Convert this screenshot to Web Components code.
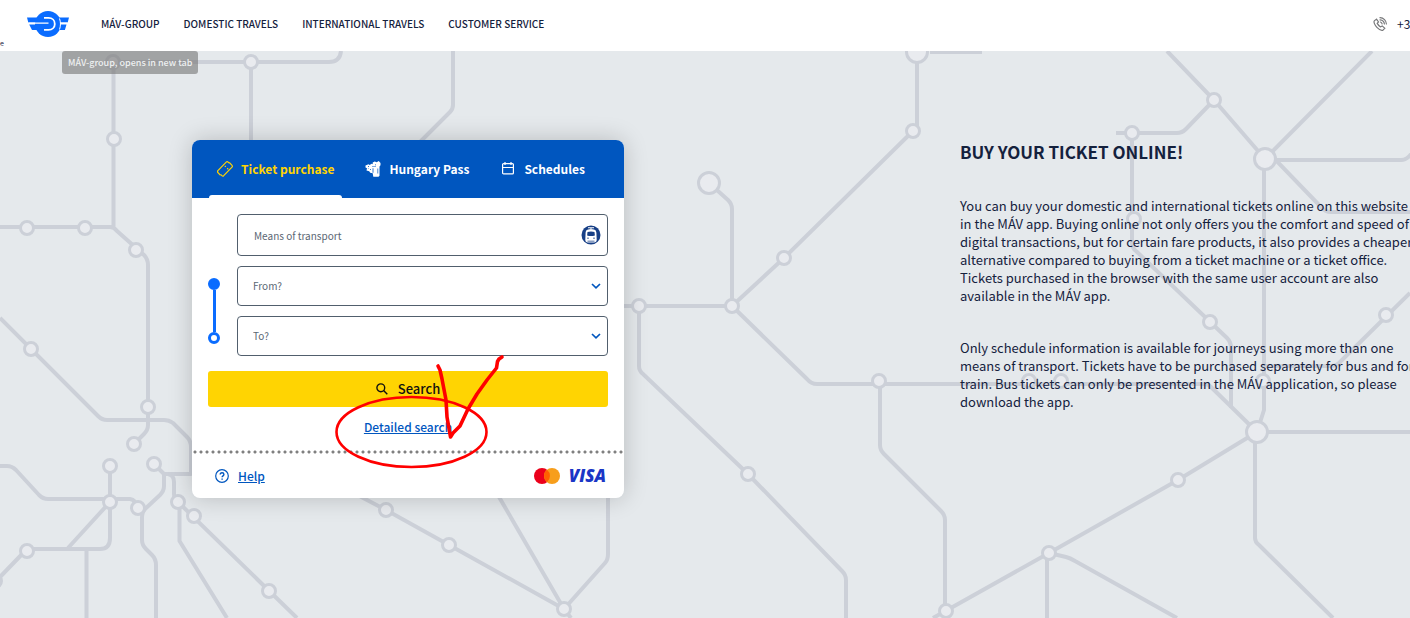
<!DOCTYPE html>
<html lang="en">
<head>
<meta charset="utf-8">
<title>MÁV-group</title>
<style>
  body {
    margin: 0;
    min-height: 100vh;
    display: flex;
    flex-direction: column;
    overflow: hidden;
    color: #14213d;
    background: #e5e9ec;
    font-family: "Noto Sans CJK SC", "Noto Sans", sans-serif;
  }
</style>
</head>
<body>

<mav-header>
  <mav-nav-link href="#group">MÁV-GROUP</mav-nav-link>
  <mav-nav-link href="#domestic">DOMESTIC TRAVELS</mav-nav-link>
  <mav-nav-link href="#international">INTERNATIONAL TRAVELS</mav-nav-link>
  <mav-nav-link href="#service">CUSTOMER SERVICE</mav-nav-link>
  <span slot="phone">+3</span>
  <mav-tooltip slot="tooltip">MÁV-group, opens in new tab</mav-tooltip>
</mav-header>

<mav-hero>
  <mav-search-card slot="card">
    <mav-tab slot="tabs" icon="ticket" active>Ticket purchase</mav-tab>
    <mav-tab slot="tabs" icon="pass">Hungary Pass</mav-tab>
    <mav-tab slot="tabs" icon="calendar">Schedules</mav-tab>
  </mav-search-card>
  <mav-article heading="BUY YOUR TICKET ONLINE!">
    <p>You can buy your domestic and international tickets online on this website or in the MÁV app. Buying online not only offers you the comfort and speed of digital transactions, but for certain fare products, it also provides a cheaper alternative compared to buying from a ticket machine or a ticket office. Tickets purchased in the browser with the same user account are also available in the MÁV app.</p>
    <p>Only schedule information is available for journeys using more than one means of transport. Tickets have to be purchased separately for bus and for train. Bus tickets can only be presented in the MÁV application, so please download the app.</p>
  </mav-article>
</mav-hero>

<script>
/**
 * Icon drawings, looked up by name.
 */
const icons = {
  logo: `<svg width="42" height="26" viewBox="0 0 42 26">
    <circle cx="21" cy="13" r="13" fill="#0a6cff"/>
    <path fill="#0a6cff" d="M0 6.400h42l-1.300 5H1.300zM2.200 13.400h37.300l-1.600 5.600H5z"/>
    <path fill="none" stroke="#fff" stroke-width="1.300" d="M1.500 12.200H21.500M40.700 12.200H33"/>
    <path fill="none" stroke="#fff" stroke-width="1.800" d="M17 6.900h4.500c3.800 0 6.300 2.700 6.300 6s-2.500 6-6.300 6H17"/>
    <path fill="none" stroke="#fff" d="M32.500 7.500c1.300 3.500 1.300 7.500 0 11"/>
  </svg>`,
  phone: `<svg width="14" height="14" viewBox="0 0 14 14" fill="none" stroke="#77787a" stroke-width="1.200" stroke-linecap="round">
    <path d="M3.500 2.200 1.500 3.600C.2 4.800 1.800 8.200 3.900 10.300s5 3.600 6.300 2.600l1.600-1.700-2.600-2.300-1.700 1C6 9 4.900 7.700 4.200 6.400l1.300-1.500z"/>
    <path d="M7.500 5a2.500 2.500 0 0 1 1.600 1.900M7 2.800c2.300.2 4.200 1.900 4.400 4.200M7 .7c3.600.1 6.300 2.900 6.400 6.300"/>
  </svg>`,
  ticket: `<svg width="16" height="16" viewBox="0 0 16 16" fill="none" stroke="currentColor" stroke-width="1.200" stroke-linejoin="round">
    <path d="M9.200 1.200c.6-.6 1.300-.6 1.900 0 .5.700 1.100.8 1.600.7l2.300 2.500c.6.600.5 1.200 0 1.800L6.700 14.700c-.6.500-1.200.5-1.800-.1-.4-.7-1-1-1.800-.8L.9 11.500c-.5-.6-.5-1.200 0-1.800z"/>
    <path d="m7.800 4.800 1 1m1.400 1.400 1.100 1.100" />
  </svg>`,
  pass: `<svg width="16" height="16" viewBox="0 0 16 16" fill="currentColor">
    <path d="m.5 4.500 3-1.200 1 .8 2.200-1.300 1 .4V1.500l2-1 2 .8 2-1.200L15.500 2v2.200l-1 1.300v9.300l-1 .9H8.300l-.6-3.400-2.500-.5-1-1.600L1.500 9.500 2 7.300.5 6.500z"/>
    <path fill="#0056bf" d="M7.600 7.200h.8v4.500h-.8zM12.500 7.500h.7v5h-.7zM3 5h.8v1H3zm2 3h1v.7H5zM10 3.500h1v.8h-1zM7 5.200h4v.6H7zM2.500 7.800l1.500-.4v.6z"/>
  </svg>`,
  calendar: `<svg width="16" height="16" viewBox="0 0 16 16" fill="none" stroke="currentColor" stroke-width="1.200">
    <rect x="2.600" y="2.600" width="10.800" height="10.300" rx="1"/>
    <path d="M2.600 6.500h10.800M5 1v3M11 1v3"/>
  </svg>`,
  train: `<svg width="20" height="20" viewBox="0 0 20 20">
    <circle cx="10" cy="10" r="9.500" fill="#173f86"/>
    <path fill="#fff" d="M7 2.300h6v1h-2.500v1c3.500 0 4.700 1 4.900 3.500l.3 7c0 1.700-1 2.800-2.700 2.800H7c-1.700 0-2.700-1.100-2.700-2.800l.3-7c.2-2.500 1.400-3.500 4.900-3.500v-1H7z"/>
    <path fill="#173f86" d="M6.500 7c2-.8 5-.8 7 0l.4 3.400c-2.400.8-5.400.8-7.800 0zM6 12.800h2v.8H6zm6 0h2v.8h-2zM6.500 15.800h7v.6h-7z"/>
  </svg>`,
  chevron: `<svg width="10" height="10" viewBox="0 0 10 10" fill="none" stroke="#0056bf" stroke-width="1.700"><path d="m1 3 4 3.800L9 3"/></svg>`,
  search: `<svg width="12" height="12" viewBox="0 0 12 12" fill="none" stroke="currentColor" stroke-width="1.400"><circle cx="4.800" cy="4.800" r="3.900"/><path d="m7.600 7.600 3.700 3.700"/></svg>`,
  help: `<svg width="14" height="14" viewBox="0 0 14 14" fill="none" stroke="#0056bf">
    <circle cx="7" cy="7" r="6.300" stroke-width="1.200"/>
    <path stroke-width="1.400" d="M5.200 5.600c0-1.300.9-1.900 1.900-1.900s1.800.7 1.800 1.700c0 1.400-1.800 1.500-1.800 2.900M7.100 9.400v1.300"/>
  </svg>`,
  mastercard: `<svg width="26" height="16" viewBox="0 0 26 16">
    <circle cx="8" cy="8" r="8" fill="#eb001b"/><circle cx="18" cy="8" r="8" fill="#f79e1b"/>
    <path fill="#ff5f00" d="M13 1.800a8 8 0 0 1 0 12.400 8 8 0 0 1 0-12.400z"/>
  </svg>`
}

/**
 * Defines a custom element from a function that returns its shadow markup.
 *
 * @param {string} name - The tag name.
 * @param {Function} render - Receives the element, returns markup.
 */
function define (name, render) {
  customElements.define(name, class extends HTMLElement {
    connectedCallback () {
      if (this.shadowRoot) return
      const template = document.createElement('template')
      template.innerHTML = render(this)
      this.attachShadow({ mode: 'open' }).appendChild(template.content.cloneNode(true))
    }
  })
}

define('mav-icon', el => `
  <style>
    :host { display: inline-flex; flex: none; }
    svg { display: block; }
  </style>
  ${icons[el.getAttribute('name')]}
`)

define('mav-nav-link', el => `
  <style>
    :host { display: block; }
    a { display: block; color: #14213d; font-size: 10px; font-weight: 500; line-height: 16px; text-decoration: none; white-space: nowrap; }
  </style>
  <a href="${el.getAttribute('href')}"><slot></slot></a>
`)

define('mav-tooltip', () => `
  <style>
    :host {
      display: block;
      box-sizing: border-box;
      padding: 5px 6px 4px;
      border-radius: 3px;
      background: rgba(120, 120, 120, 0.62);
      color: #eef0f1;
      font-size: 9px;
      font-weight: 500;
      line-height: 14px;
      white-space: nowrap;
    }
  </style>
  <slot></slot>
`)

define('mav-header', () => `
  <style>
    :host {
      display: flex;
      align-items: center;
      position: relative;
      z-index: 2;
      height: 51px;
      padding-left: 27px;
      background: #fff;
    }
    .home { display: flex; padding-bottom: 4px; }
    nav { display: flex; gap: 24px; margin-left: 32px; padding-bottom: 4px; }
    .phone {
      display: flex;
      align-items: center;
      gap: 10px;
      width: 37px;
      margin-left: auto;
      padding-bottom: 4px;
      font-size: 12px;
      line-height: 18px;
    }
    .tip { position: absolute; left: 62px; top: 51px; }
    .skip { position: absolute; left: 0; top: 38px; font-size: 7px; line-height: 10px; }
  </style>
  <a class="home" href="#home" aria-label="Home"><mav-icon name="logo"></mav-icon></a>
  <nav><slot></slot></nav>
  <div class="phone"><mav-icon name="phone"></mav-icon><slot name="phone"></slot></div>
  <span class="skip">e</span>
  <div class="tip"><slot name="tooltip"></slot></div>
`)

// Railway network behind the hero content: [x, y] of every stop.
const stops = [
  [113, 62], [251, 62], [114, 139], [27, 228], [85, 228], [136, 250], [31, 349], [148, 407], [134, 444],
  [110, 466], [154, 464], [110, 502], [138, 508], [178, 502], [194, 516], [27, 551], [269, 591], [-5, 581],
  [386, 510], [449, 545], [564, 609], [639, 306], [732, 306], [784, 258], [913, 131], [748, 474],
  [879, 381], [946, 611], [1049, 553], [1178, 480], [1029, 381], [1061, 381], [1263, 381],
  [1214, 100], [1132, 133], [1134, 219], [1210, 322], [1386, 315]
]
const hubs = [[709, 183], [917, 52], [1265, 159], [1257, 432]]

define('mav-network', () => `
  <style>
    :host { display: block; overflow: hidden; }
    svg { display: block; }
    path { fill: none; stroke: #ccd0d8; stroke-width: 4; stroke-linejoin: round; }
    circle { fill: #e9ebef; stroke: #ccd0d8; stroke-width: 3; }
  </style>
  <svg width="1410" height="567" viewBox="0 51 1410 567" aria-hidden="true">
    <path d="M113 62H329Q340 62 341 51M251 62V150M113.500 62V227M0 227H110Q114 227 117 231L144 255Q148 259 148 265V425Q148 430 144 434L134 444"/>
    <path d="M0 318 98 416Q102 420 107 420H164Q169 420 173 423L187 437Q191 441 191 447V474H164L154 464M164 474V486Q164 491 160 495L145 509Q142 512 142 518V540Q142 545 146 549L152 555Q156 559 156 565V618M168 474Q174 475 174 482V494Q174 498 178 502L297 618M179.500 502V541L227 618"/>
    <path d="M0 466H7Q12 466 16 470L39 495Q43 499 48 499H130Q136 500 138 508M110 466V538Q110 549 100 549H27L0 577M110 502 68 548M86.500 549V618"/>
    <path d="M350 491 386 510 449 545 564 609 571 618M495 490 564 609 605 563Q608 560 608 554V490M453 51V105Q453 109 450 112L415 147"/>
    <path d="M709 183 728 200Q732 204 732 209V306M610 306H732L784 258 913 131M917 51V127M930 52H982M732 306 807 379Q811 384 817 384H1204Q1208 384 1211 387L1257 432M639 306V366Q639 371 643 374L748 474 842 571Q846 575 846 580V618"/>
    <path d="M880 381V445Q880 450 884 454L941 511Q945 515 945 520V611M933 618 1049 553 1178 480 1257 432H1410M1047 553V618M1049 553 1066 557Q1070 558 1075 561L1177 618"/>
    <path d="M1167 51 1214 100 1265 159 1372 51M1214 100 1186 129Q1182 133 1177 133H1116M1132 133V243Q1132 248 1136 251L1227 338Q1231 342 1231 348V408M1265 160H1401Q1407 160 1411 154M1265 149 1321 207Q1325 212 1331 212H1410M1264 159V410L1257 432M1410 293 1341 361Q1337 366 1331 366H1264M1255 432V538Q1255 542 1259 545L1333 618"/>
    ${stops.map(([x, y]) => `<circle cx="${x}" cy="${y}" r="6.500"/>`).join('')}
    ${hubs.map(([x, y]) => `<circle cx="${x}" cy="${y}" r="10.500"/>`).join('')}
  </svg>
`)

define('mav-hero', () => `
  <style>
    :host { display: block; flex: 1; position: relative; overflow: hidden; }
    mav-network { position: absolute; inset: 0; }
    .content {
      position: relative;
      display: grid;
      grid-template-columns: 432px 466px;
      align-items: start;
      gap: 336px;
      padding: 89px 0 0 192px;
    }
    mav-markup { position: absolute; left: 330px; top: 299px; }
  </style>
  <mav-network></mav-network>
  <div class="content"><slot name="card"></slot><slot></slot></div>
  <mav-markup></mav-markup>
`)

// Hand-drawn red marks around the detailed search link.
define('mav-markup', () => `
  <style>
    :host { display: block; pointer-events: none; }
    svg { display: block; }
  </style>
  <svg width="180" height="124" viewBox="330 350 180 124" fill="none" stroke="#f00" stroke-linecap="round" stroke-linejoin="round" aria-hidden="true">
    <ellipse cx="411.500" cy="432" rx="75" ry="35" stroke-width="2.600"/>
    <path stroke-width="3.600" d="M438 366 440 370 442 379 446 400 447 417 450.500 437 453 433 460 426 468 409 477 394 487 380 496.500 368 497.500 361.500 499 359 502 357"/>
  </svg>
`)

define('mav-article', el => `
  <style>
    :host { display: block; padding-top: 1px; }
    h2 { margin: 0 0 34px; font-size: 17px; font-weight: 700; line-height: 22px; }
    ::slotted(p) { margin: 0 0 34px; font-size: 13px; line-height: 18px; }
  </style>
  <h2>${el.getAttribute('heading')}</h2>
  <slot></slot>
`)

define('mav-tab', el => `
  <style>
    :host { display: flex; }
    button {
      display: flex;
      align-items: center;
      gap: 8px;
      padding: 0 8px;
      border: 0;
      background: none;
      color: #fff;
      font: 700 12px/18px "Noto Sans CJK SC", "Noto Sans", sans-serif;
      white-space: nowrap;
    }
    :host([active]) { position: relative; }
    :host([active]) button { color: #ffd402; }
    :host([active])::after {
      content: "";
      position: absolute;
      inset: auto 0 0;
      height: 3px;
      border-radius: 3px 3px 0 0;
      background: #fff;
    }
  </style>
  <button type="button" role="tab"><mav-icon name="${el.getAttribute('icon')}"></mav-icon><slot></slot></button>
`)

define('mav-field', el => {
  const label = el.getAttribute('label')
  const control = el.hasAttribute('select')
    ? `<select id="control" aria-label="${label}"><option>${label}</option></select>`
    : `<input id="control" type="text" aria-label="${label}" placeholder="${label}">`
  return `
  <style>
    :host { display: grid; align-items: center; }
    input, select {
      grid-area: 1 / 1;
      box-sizing: border-box;
      width: 100%;
      height: 40px;
      margin: 0;
      padding: 0 15px;
      border: 1px solid #515f6d;
      border-radius: 4px;
      background: #fff;
      color: #5b6774;
      font: 400 10px/16px "Noto Sans CJK SC", "Noto Sans", sans-serif;
      appearance: none;
    }
    input { height: 42px; padding: 0 16px; }
    input::placeholder { color: #5b6774; opacity: 1; }
    mav-icon { grid-area: 1 / 1; justify-self: end; margin-right: 7px; pointer-events: none; }
  </style>
  ${control}
  <mav-icon name="${el.getAttribute('icon')}"></mav-icon>`
})

define('mav-search-card', () => `
  <style>
    :host {
      display: block;
      border-radius: 8px;
      background: #fff;
      box-shadow: 0 0 24px rgba(0, 0, 0, 0.2);
      overflow: hidden;
    }
    .tabs { display: flex; gap: 15px; height: 58px; padding: 0 17px; background: #0056bf; }
    form { display: flex; flex-direction: column; padding: 16px 16px 14px; }
    .fields { display: grid; grid-template-columns: 12px 1fr; column-gap: 17px; row-gap: 10px; }
    .fields mav-field { grid-column: 2; }
    .route { grid-column: 1; grid-row: 2 / 4; display: flex; flex-direction: column; align-items: center; padding: 12px 0; }
    .dot { box-sizing: border-box; width: 12px; height: 12px; border: 3px solid #0a6cff; border-radius: 50%; }
    .dot.start { background: #0a6cff; }
    .rail { flex: 1; width: 3px; background: #0a6cff; }
    button {
      display: flex;
      align-items: center;
      justify-content: center;
      gap: 10px;
      height: 36px;
      margin: 15px 0 11px;
      padding: 0;
      border: 0;
      border-radius: 3px;
      background: #ffd402;
      color: #111;
      font: 500 13px/20px "Noto Sans CJK SC", "Noto Sans", sans-serif;
    }
    a { color: #0056bf; font-size: 12px; font-weight: 500; line-height: 18px; }
    .detailed { align-self: center; }
    .dots {
      height: 4px;
      background: radial-gradient(circle, #808080 1px, #80808000 2px) 0 0 / 6px 4px;
    }
    footer { display: flex; align-items: center; gap: 9px; height: 44px; padding: 0 18px 0 23px; }
    .mastercard { margin-left: auto; }
    .visa { color: #1a36c6; font: italic 800 17px/20px "Open Sans", "Noto Sans", sans-serif; }
  </style>
  <div class="tabs" role="tablist"><slot name="tabs"></slot></div>
  <form>
    <div class="fields">
      <mav-field label="Means of transport" icon="train"></mav-field>
      <div class="route"><span class="dot start"></span><span class="rail"></span><span class="dot"></span></div>
      <mav-field label="From?" icon="chevron" select></mav-field>
      <mav-field label="To?" icon="chevron" select></mav-field>
    </div>
    <button type="button"><mav-icon name="search"></mav-icon>Search</button>
    <a class="detailed" href="#detailed">Detailed search</a>
  </form>
  <div class="dots"></div>
  <footer>
    <mav-icon name="help"></mav-icon><a href="#help">Help</a>
    <mav-icon class="mastercard" name="mastercard"></mav-icon><span class="visa">VISA</span>
  </footer>
`)
</script>
</body>
</html>
